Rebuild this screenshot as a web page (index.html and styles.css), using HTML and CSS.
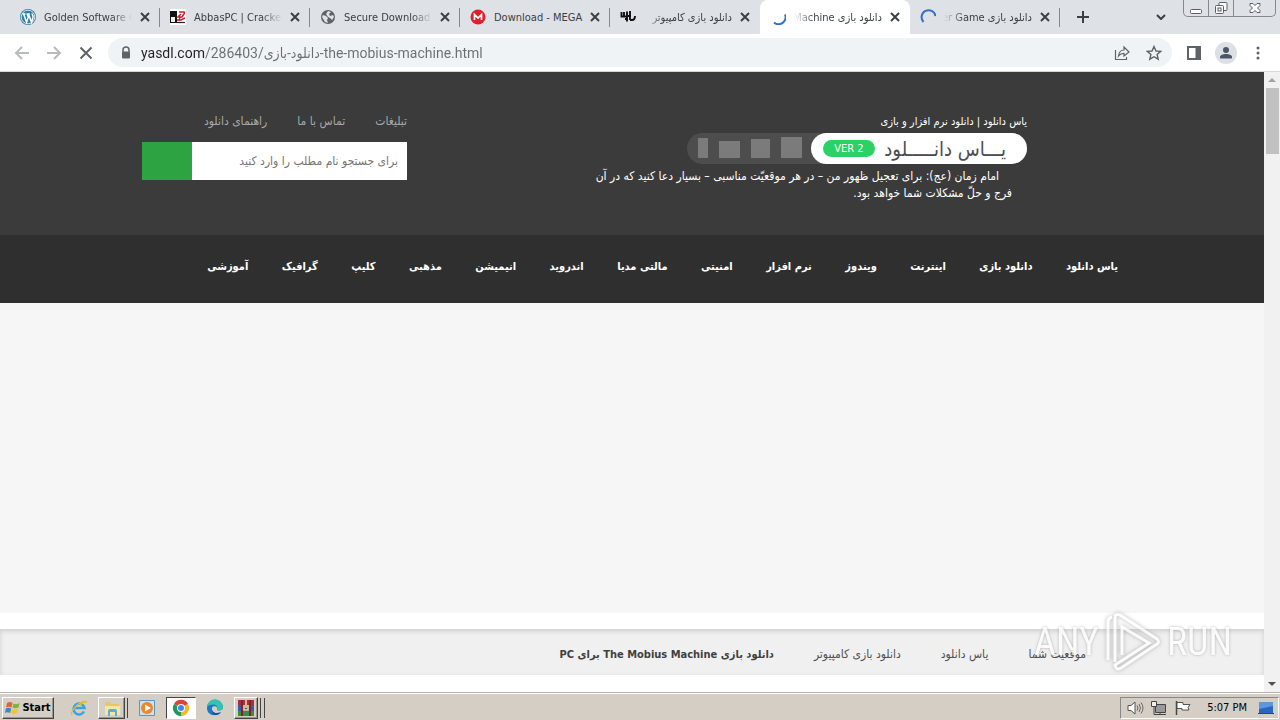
FILE: index.html
```html
<!DOCTYPE html>
<html lang="fa">
<head>
<meta charset="utf-8">
<title>دانلود بازی The Mobius Machine برای PC</title>
<link rel="stylesheet" href="styles.css">
</head>
<body>
<div class="tabstrip">
  <div class="tabs">
    <div class="tab">
      <svg class="fav" viewBox="0 0 16 16"><circle cx="8" cy="8" r="8" fill="#2f7ea5"/><circle cx="8" cy="8" r="6.8" fill="none" stroke="#fff" stroke-width=".8"/><path d="M2.500 5h3M3.600 5l3 8.300L8.300 8 7 5M6.500 5h3.300M8.500 5l3 8.300L13 8.500c.5-2-1.200-2.500-.8-4" fill="none" stroke="#fff" stroke-width="1.500"/></svg>
      <span class="title">Golden Software Grapher</span>
      <button class="close" aria-label="Close tab"><svg viewBox="0 0 10 10"><path d="M1 1l8 8M9 1l-8 8"/></svg></button>
    </div>
    <div class="tab">
      <svg class="fav" viewBox="0 0 16 16"><path fill="#fff" d="M0 0h16v16H0z"/><path fill="#111" d="M0 2h7v12H0z"/><path fill="#eee" d="M1 8h4v5H1z"/><path d="M9 3h5q1 0 0 2l-2 3H8l3-3M7 11h4l4-2M10 8l-1 4" fill="none" stroke="#c52234" stroke-width="1.500"/><path d="M7 13.500h8" stroke="#222" stroke-width="1.200"/></svg>
      <span class="title">AbbasPC | Cracked Software</span>
      <button class="close" aria-label="Close tab"><svg viewBox="0 0 10 10"><path d="M1 1l8 8M9 1l-8 8"/></svg></button>
    </div>
    <div class="tab">
      <svg class="fav" viewBox="0 0 16 16"><circle cx="8" cy="8" r="7" fill="#5f6368"/><path d="M3 6l3 1 2 2-1 2 1 3-3-1-3-5zM8 2l3 1-2 2 1 2 3-1 1 2-2 3-2-2-2-1-2-3z" fill="#dee1e6"/></svg>
      <span class="title">Secure Download Gateway</span>
      <button class="close" aria-label="Close tab"><svg viewBox="0 0 10 10"><path d="M1 1l8 8M9 1l-8 8"/></svg></button>
    </div>
    <div class="tab">
      <svg class="fav" viewBox="0 0 16 16"><circle cx="8" cy="8" r="7.500" fill="#e01f2d"/><path d="M4.500 11V5.500L8 9l3.500-3.500V11" fill="none" stroke="#fff" stroke-width="1.700"/></svg>
      <span class="title full">Download - MEGA</span>
      <button class="close" aria-label="Close tab"><svg viewBox="0 0 10 10"><path d="M1 1l8 8M9 1l-8 8"/></svg></button>
    </div>
    <div class="tab before-active">
      <svg class="fav" viewBox="0 0 16 16"><path d="M1.500 3v4.500H7M4 3v4M7 2.500v10M5 10h3M10 2v9M10 11h2q3 0 3-4M8 7h3" fill="none" stroke="#111" stroke-width="1.900"/></svg>
      <span class="title fa" dir="rtl">دانلود بازی کامپیوتر</span>
      <button class="close" aria-label="Close tab"><svg viewBox="0 0 10 10"><path d="M1 1l8 8M9 1l-8 8"/></svg></button>
    </div>
    <div class="tab active">
      <svg class="fav" viewBox="0 0 16 16"><path d="M15 5.500a7 7 0 0 1-11 8" fill="none" stroke="#3371cd" stroke-width="2"/></svg>
      <span class="title fa" dir="rtl">دانلود بازی The Mobius Machine</span>
      <button class="close" aria-label="Close tab"><svg viewBox="0 0 10 10"><path d="M1 1l8 8M9 1l-8 8"/></svg></button>
    </div>
    <div class="tab">
      <svg class="fav" viewBox="0 0 16 16"><path d="M3.500 13A7 7 0 1 1 15.500 7" fill="none" stroke="#3371cd" stroke-width="2"/></svg>
      <span class="title fa" dir="rtl">دانلود بازی Another Game</span>
      <button class="close" aria-label="Close tab"><svg viewBox="0 0 10 10"><path d="M1 1l8 8M9 1l-8 8"/></svg></button>
    </div>
    <button class="newtab" aria-label="New tab"><svg viewBox="0 0 12 12"><path d="M6 0v12M0 6h12"/></svg></button>
  </div>
  <button class="search-tabs" aria-label="Search tabs"><svg viewBox="0 0 10 6"><path d="M1 1l4 4 4-4"/></svg></button>
  <div class="winctl">
    <button aria-label="Minimize"><svg viewBox="0 0 16 14"><rect x="2.500" y="8.500" width="11" height="4" rx="1"/></svg></button>
    <button aria-label="Restore"><svg viewBox="0 0 16 14"><rect x="6" y="1.500" width="8" height="8" rx="1"/><rect x="2.500" y="4.500" width="8" height="8" rx="1"/><rect x="5" y="7" width="3" height="3"/></svg></button>
    <button class="wide" aria-label="Close"><svg viewBox="0 0 16 14"><path d="M3 2.500h3l2 2 2-2h3v2L10.500 7 13 9.500v2h-3l-2-2-2 2H3v-2L5.500 7 3 4.500z"/></svg></button>
  </div>
</div>

<div class="toolbar">
  <button class="tool dim" aria-label="Back"><svg viewBox="0 0 16 16"><path d="M15 8H2M8 2L2 8l6 6"/></svg></button>
  <button class="tool dim" aria-label="Forward"><svg viewBox="0 0 16 16"><path d="M1 8h13M8 2l6 6-6 6"/></svg></button>
  <button class="tool" aria-label="Stop"><svg viewBox="0 0 16 16"><path d="M2.500 2.500l11 11M13.500 2.500l-11 11"/></svg></button>
  <div class="omnibox">
    <svg class="lock" viewBox="0 0 12 14"><path d="M3 6V4a3 3 0 0 1 6 0v2" fill="none" stroke="#5f6368" stroke-width="1.500"/><rect x="2" y="5.500" width="8" height="7" rx="1" fill="#5f6368"/></svg>
    <input class="url" type="text" aria-label="Address" value="yasdl.com/286403/دانلود-بازی-the-mobius-machine.html">
    <button class="tool" aria-label="Share"><svg viewBox="0 0 16 16"><path d="M1.500 5v9.500h11V12M4.500 11c.5-4 2.500-6 5.500-6V2l5 5-5 4V8.300c-2.500 0-4 .7-5.500 2.700z" stroke-width="1.200"/></svg></button>
    <button class="tool" aria-label="Bookmark"><svg viewBox="0 0 16 16"><path d="M8 1.500l2 4.500 4.700.4-3.600 3.100 1.100 4.700L8 11.700l-4.200 2.500 1.100-4.700L1.300 6.400 6 6z" stroke-width="1.400"/></svg></button>
  </div>
  <button class="tool" aria-label="Side panel"><svg viewBox="0 0 16 16"><path d="M2 2h12v12H2z" stroke-width="2"/><path d="M10.500 2H14v12h-3.500z" fill="#5f6368"/></svg></button>
  <button class="tool avatar" aria-label="Profile"><svg viewBox="0 0 16 16"><circle cx="8" cy="5" r="3"/><path d="M2 13.500V12c0-2 3-3 6-3s6 1 6 3v1.500z"/></svg></button>
  <button class="tool more" aria-label="Menu"><svg viewBox="0 0 16 16"><circle cx="8" cy="3" r="1.500"/><circle cx="8" cy="8" r="1.500"/><circle cx="8" cy="13" r="1.500"/></svg></button>
</div>

<div class="viewport">
  <div class="page" dir="rtl">
    <header class="site-header">
      <div class="brand">
        <h1>یاس دانلود | دانلود نرم افزار و بازی</h1>
        <div class="logo">
          <div class="logo-main"><span class="logo-name">یـــاس دانـــــلود</span><span class="version" dir="ltr">VER 2</span></div>
          <div class="blocks"><i class="b1"></i><i class="b2"></i><i class="b3"></i><i class="b4"></i></div>
        </div>
        <p>امام زمان (عج): برای تعجیل ظهور من – در هر موقعیّت مناسبی – بسیار دعا کنید که در آن<br>فرج و حلّ مشکلات شما خواهد بود.</p>
      </div>
      <div class="side">
        <div class="links"><a href="#">تبلیغات</a><a href="#">تماس با ما</a><a href="#">راهنمای دانلود</a></div>
        <form class="search"><input type="text" aria-label="جستجو" placeholder="برای جستجو نام مطلب را وارد کنید"><button type="button" aria-label="جستجو"></button></form>
      </div>
    </header>
    <nav class="menu">
      <a href="#">یاس دانلود</a><a href="#">دانلود بازی</a><a href="#">اینترنت</a><a href="#">ویندوز</a><a href="#">نرم افزار</a><a href="#">امنیتی</a><a href="#">مالتی مدیا</a><a href="#">اندروید</a><a href="#">انیمیشن</a><a href="#">مذهبی</a><a href="#">کلیپ</a><a href="#">گرافیک</a><a href="#">آموزشی</a>
    </nav>
    <div class="banner"></div>
    <div class="crumbs"><span>موقعیت شما</span><a href="#">یاس دانلود</a><a href="#">دانلود بازی کامپیوتر</a><b>دانلود بازی The Mobius Machine برای PC</b></div>
  </div>
  <div class="scrollbar">
    <svg viewBox="0 0 16 16"><path d="M4 10l4-4 4 4z" fill="#a3a3a3"/></svg>
    <div class="thumb"></div>
    <svg class="down" viewBox="0 0 16 16"><path d="M4 6l4 4 4-4z" fill="#505050"/></svg>
  </div>
  <div class="watermark"><span>ANY</span>
    <svg viewBox="0 0 60 64"><path d="M5 50V12q0-4 4-5M12 52V8q0-5 5-3l37 24q3 3 0 5L18 58q-5 3-6-3l34-22L19 17v28" fill="none" stroke="#fff" stroke-width="3"/></svg>
  <span>RUN</span></div>
</div>

<div class="taskbar">
  <button class="start"><svg viewBox="0 0 16 16"><path d="M2 3q3-2 5.500 0L6.500 7.500Q4 6 1 7.500z" fill="#e8642c"/><path d="M8.500 3.500q3 1.500 6-.5L13.500 7.500q-3 1.500-6 0z" fill="#7db53c"/><path d="M.8 8.500q3-1.500 5.500 0L5 13q-2.500-1.500-5 0z" fill="#3c86cf"/><path d="M7.300 8.700q3 1.500 6 0L12 13q-3 1.500-6 0z" fill="#f4c332"/></svg>Start</button>
  <button class="task" aria-label="Internet Explorer"><svg viewBox="0 0 18 18"><path d="M14 12.500A5.500 5.500 0 1 1 14.500 9H5" fill="none" stroke="#3ba4dd" stroke-width="2.600"/><path d="M2 16C-1 13 11 0 17 3c-2-.5-5 1-7 3" fill="none" stroke="#e6b93a" stroke-width="1.300"/></svg></button>
  <button class="task raised stack" aria-label="Explorer"><svg viewBox="0 0 18 18"><path d="M2 3h5l1 2h8v11H2z" fill="#e4c66c"/><path d="M2 7h15v9H2z" fill="#f5e6a3"/><path d="M5 17v-5q0-2 2-2h5q2 0 2 2v5h-2v-4H7v4z" fill="#5daed0"/></svg></button>
  <button class="task" aria-label="Media Player"><svg viewBox="0 0 18 18"><path d="M1.500 1.500h15v15h-15z" fill="#c7e2f4" stroke="#5c95c3"/><circle cx="9" cy="9" r="6" fill="#ee8526"/><path d="M7 5.500l6 3.500-6 3.500z" fill="#fff"/></svg></button>
  <button class="task pressed" aria-label="Chrome"><svg viewBox="0 0 18 18"><path d="M9 9L2 5a8 8 0 0 1 14 0z" fill="#db4437"/><path d="M9 9l7-4a8 8 0 0 1-7 12z" fill="#f4b929"/><path d="M9 9v8A8 8 0 0 1 2 5z" fill="#1c9b57"/><circle cx="9" cy="9" r="4" fill="#fff"/><circle cx="9" cy="9" r="3" fill="#4285f4"/></svg></button>
  <button class="task" aria-label="Edge"><svg viewBox="0 0 18 18"><path d="M1 9a8 8 0 0 1 16-.5c0 3-5 4-6 2 1-3-2-4-4-3s-2 6 5 7.500C7 18 1 15 1 9z" fill="#1b77c8"/><path d="M1 8a8 8 0 0 1 16 .5c0 3-5 4-6 2C13 5 5 4 1 8z" fill="#37c2b0"/><path d="M6 9c-1 5 4 6 9 4-2 4-10 5-9-4z" fill="#124f9d"/></svg></button>
  <button class="task raised stack more-stack" aria-label="WinRAR"><svg viewBox="0 0 18 18"><path d="M1 1h16v5H1z" fill="#a82c45"/><path d="M1 6h16v6H1z" fill="#3c58a6"/><path d="M1 12h16v5H1z" fill="#3b8c3f"/><path d="M5 1v16M13 1v16" stroke="#7a2434" stroke-width="2"/><path d="M7 6v5h4V6M9 1v8" fill="none" stroke="#f1d88c" stroke-width="1.600"/></svg></button>
  <div class="tray">
    <svg viewBox="0 0 18 16"><path d="M2 5.500h3l4-3.500v12l-4-3.500H2z" fill="#fff" stroke="#555"/><path d="M11 5.500q2 2.500 0 5M13 4q3 4 0 8M15 2.500q4 5.500 0 11" fill="none" stroke="#666"/></svg>
    <svg viewBox="0 0 18 16"><path d="M5.500 4.500h10v8h-10z" fill="#999" stroke="#444"/><path d="M1.500 1.500h5v5h-5z" fill="#eee" stroke="#444"/><path d="M4 6.500v8h12M10 12.500v2" fill="none" stroke="#444"/></svg>
    <svg viewBox="0 0 18 16"><path d="M2.500 1v14" stroke="#444" stroke-width="1.500"/><path d="M3 2.500h6v2h7l-2 3 1 2.500H8V8.500H3z" fill="#fff" stroke="#555"/></svg>
    <time>5:07 PM</time>
    <svg viewBox="0 0 18 16"><path d="M2 2h14v11H2z" fill="#2767bd"/><path d="M2 2h14v4L2 9z" fill="#5b98df"/><path d="M1 13.500h16" stroke="#345"/></svg>
  </div>
</div>
</body>
</html>
```
FILE: styles.css
```css
* { box-sizing: border-box; }
body {
  margin: 0;
  height: 100vh;
  display: flex;
  flex-direction: column;
  overflow: hidden;
  background: #fff;
  font-family: "DejaVu Sans Condensed", "DejaVu Sans", "Noto Sans", sans-serif;
  font-size: 11px;
  color: #3c4043;
}
button, input { font: inherit; border: 0; padding: 0; background: none; color: inherit; }
a { color: inherit; text-decoration: none; }
svg { flex: none; }

.tabstrip { display: flex; height: 34px; background: #dee1e6; }
.tabs { display: flex; flex: 1; min-width: 0; padding-left: 10px; }
.tab {
  flex: 0 1 150px;
  min-width: 0;
  display: flex;
  align-items: center;
  padding: 0 10px;
  position: relative;
}
.tab::after { content: ""; position: absolute; right: 0; top: 8px; height: 19px; width: 1px; background: #85888d; }
.tab.before-active::after, .tab.active::after { display: none; }
.tab.active { background: #fff; border-radius: 8px 8px 0 0; }
.fav { width: 16px; height: 16px; }
.title {
  flex: 1;
  min-width: 0;
  margin: 0 8px;
  white-space: nowrap;
  overflow: hidden;
  -webkit-mask-image: linear-gradient(to left, transparent, #000 20px);
  mask-image: linear-gradient(to left, transparent, #000 20px);
}
.title.full { margin-right: 0; -webkit-mask-image: none; mask-image: none; }
.title.fa {
  -webkit-mask-image: linear-gradient(to right, transparent, #000 20px);
  mask-image: linear-gradient(to right, transparent, #000 20px);
}
.close { width: 10px; height: 10px; display: flex; }
.close svg { width: 10px; height: 10px; stroke: #3c4043; stroke-width: 2; }
.newtab { width: 46px; display: flex; align-items: center; justify-content: center; }
.newtab svg { width: 12px; stroke: #3c4043; stroke-width: 2; }
.search-tabs { width: 44px; display: flex; align-items: center; justify-content: center; }
.search-tabs svg { width: 10px; fill: none; stroke: #3c4043; stroke-width: 2; }
.winctl {
  display: flex;
  height: 17px;
  margin-right: 4px;
  border: 1px solid #85888f;
  border-top: 0;
  border-radius: 0 0 5px 5px;
}
.winctl button { width: 25px; display: flex; align-items: center; justify-content: center; border-right: 1px solid #85888f; }
.winctl button.wide { width: 41px; border-right: 0; }
.winctl svg { width: 16px; height: 14px; fill: #fafafa; stroke: #5c6068; }

.toolbar {
  display: flex;
  align-items: center;
  height: 38px;
  padding: 0 6px;
  border-bottom: 1px solid #d5d7da;
}
.tool { width: 32px; height: 28px; display: flex; align-items: center; justify-content: center; }
.tool svg { width: 16px; height: 16px; fill: none; stroke: #5f6368; stroke-width: 2; }
.tool.dim svg { stroke: #b8babd; }
.omnibox {
  flex: 1;
  display: flex;
  align-items: center;
  height: 29px;
  margin: 0 6px;
  padding: 0 2px 0 12px;
  border-radius: 15px;
  background: #f0f3f5;
}
.lock { width: 12px; height: 14px; }
.url {
  flex: 1;
  min-width: 0;
  margin-left: 9px;
  height: 24px;
  font-family: Roboto, "DejaVu Sans Condensed", sans-serif;
  font-size: 14px;
  outline: 0;
  color: transparent;
  background: linear-gradient(to right, #202124 64px, #6a6e73 64px);
  -webkit-background-clip: text;
  background-clip: text;
}
.tool.avatar svg { width: 22px; height: 22px; padding: 3px; border-radius: 11px; background: #dcdfe4; fill: #4c5468; stroke: none; }
.tool.more svg { fill: #5f6368; stroke: none; }

.viewport { flex: 1; min-height: 0; display: flex; position: relative; }
.page { flex: 1; min-width: 0; display: flex; flex-direction: column; padding-bottom: 17px; }
.site-header {
  display: flex;
  justify-content: space-between;
  height: 163px;
  padding: 41px 237px 0 142px;
  background: #3b3b3b;
  color: #fff;
}
.brand { display: flex; flex-direction: column; }
.brand h1 { margin: 0; font-size: 11px; font-weight: 400; line-height: 17px; }
.logo { width: 340px; height: 31px; margin-top: 3px; display: flex; border-radius: 16px; background: #4d4d4d; }
.logo-main {
  width: 216px;
  display: flex;
  align-items: center;
  justify-content: space-between;
  padding: 0 21px 0 12px;
  border-radius: 16px;
  background: #fff;
  color: #4d4d4d;
}
.logo-name { font-size: 20px; line-height: 30px; white-space: nowrap; }
.version { width: 52px; border-radius: 9px; background: #2ad165; color: #fff; text-align: center; line-height: 17px; }
.blocks { flex: 1; display: flex; align-items: flex-end; gap: 11px; padding: 0 9px 6px 0; }
.blocks i { background: #7b7b7b; }
.b1 { width: 21px; height: 21px; }
.b2 { width: 19px; height: 19px; }
.b3 { width: 21px; height: 17px; }
.b4 { width: 10px; height: 20px; }
.brand p { margin: 4px 0 0; padding-right: 15px; text-indent: 13px; font-size: 12px; line-height: 17px; white-space: nowrap; }
.side { width: 265px; }
.links { display: flex; gap: 30px; font-size: 12px; line-height: 17px; color: #a8a8a8; }
.search { display: flex; height: 38px; margin: 12px 0 0; background: #fff; }
.search input { flex: 1; min-width: 0; padding: 0 9px; font-size: 12px; color: #555; }
.search input::placeholder { color: #757575; opacity: 1; }
.search button { width: 50px; background: #2da341; }
.menu {
  display: flex;
  justify-content: space-between;
  align-items: center;
  height: 68px;
  padding: 0 146px 6px 207px;
  background: #2f2f2f;
  color: #fff;
  font-weight: 700;
}
.banner { flex: 1; background: #f6f6f6; }
.crumbs {
  display: flex;
  align-items: center;
  gap: 40px;
  height: 46px;
  margin-top: 16px;
  padding: 4px 178px 0 0;
  background: #f0f0f0;
  box-shadow: inset 0 2px 5px #ccc;
  color: #505050;
  font-size: 12px;
  white-space: nowrap;
}
.crumbs b { color: #404040; font-size: 11px; }

.scrollbar { width: 16px; display: flex; flex-direction: column; background: #f1f1f1; }
.scrollbar svg { width: 16px; height: 16px; }
.thumb { height: 66px; margin: 0 1px 0 2px; background: #c1c1c1; }
.scrollbar .down { margin-top: auto; }

.watermark {
  position: absolute;
  right: 48px;
  bottom: 18px;
  display: flex;
  align-items: center;
  gap: 4px;
  color: #fff;
  font-family: "Liberation Sans Narrow", "Roboto Condensed", Roboto, sans-serif;
  font-size: 38px;
  line-height: 64px;
  opacity: .75;
  text-shadow: 0 0 3px #999;
  pointer-events: none;
}
.watermark svg { width: 60px; height: 64px; filter: drop-shadow(0 0 2px #999); }

.taskbar {
  display: flex;
  align-items: center;
  gap: 4px;
  height: 28px;
  padding: 2px 1px 0 2px;
  border-top: 1px solid #b8b4ac;
  background: #d5cec5;
  box-shadow: inset 0 1px #fff;
  color: #000;
}
.taskbar button { height: 22px; display: flex; align-items: center; justify-content: center; }
.start, .raised { border: 1px solid; border-color: #fff #444 #444 #fff; box-shadow: inset -1px -1px #9a958d; }
.start { width: 52px; gap: 1px; font-weight: 700; margin-right: 6px; }
.start svg { width: 16px; height: 16px; }
.task { width: 30px; }
.task svg { width: 18px; height: 18px; }
.taskbar .pressed { background: #fff; border: 1px solid; border-color: #444 #fff #fff #444; }
.stack { position: relative; width: 27px; margin-right: 3px; }
.stack::after { content: ""; position: absolute; left: 100%; top: 0; box-sizing: border-box; width: 4px; height: 20px; border-right: 1px solid #444; }
.more-stack { width: 24px; }
.more-stack::after { width: 5px; border-left: 1px solid #444; margin-left: 3px; }
.tray {
  margin-left: auto;
  display: flex;
  align-items: center;
  gap: 6px;
  height: 22px;
  padding: 0 3px 0 5px;
  border: 1px solid;
  border-color: #888 #fff #fff #888;
}
.tray svg { width: 18px; height: 16px; }
.tray time { margin: 0 4px 0 9px; }
```
